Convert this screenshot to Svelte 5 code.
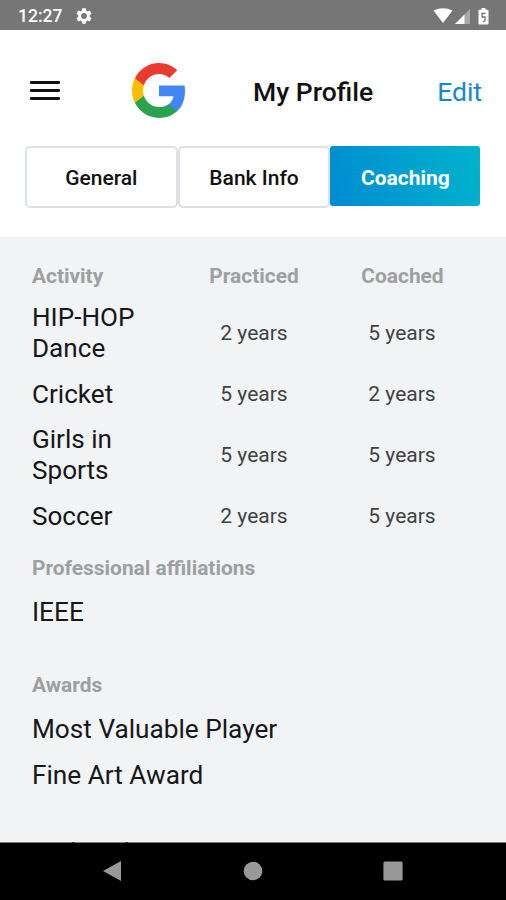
<script>
  let activeTab = 'Coaching';

  const tabs = ['General', 'Bank Info', 'Coaching'];

  const activities = [
    { name: 'HIP-HOP Dance', practiced: '2 years', coached: '5 years' },
    { name: 'Cricket', practiced: '5 years', coached: '2 years' },
    { name: 'Girls in Sports', practiced: '5 years', coached: '5 years' },
    { name: 'Soccer', practiced: '2 years', coached: '5 years' },
  ];

  const affiliations = ['IEEE'];
  const awards = ['Most Valuable Player', 'Fine Art Award'];
</script>

<div class="screen">
  <!-- Status bar -->
  <div class="status">
    <span class="time">12:27</span>
    <svg class="gear" viewBox="2 2 20 20" width="16" height="16">
      <path fill="#fff" fill-rule="evenodd" d="M19.14 12.94c.04-.3.06-.61.06-.94 0-.32-.02-.64-.07-.94l2.03-1.58c.18-.14.23-.41.12-.61l-1.92-3.32c-.12-.22-.37-.29-.59-.22l-2.39.96c-.5-.38-1.03-.7-1.62-.94l-.36-2.54c-.04-.24-.24-.41-.48-.41h-3.84c-.24 0-.43.17-.47.41l-.36 2.54c-.59.24-1.13.57-1.62.94l-2.39-.96c-.22-.08-.47 0-.59.22L2.74 8.87c-.12.21-.08.47.12.61l2.03 1.58c-.05.3-.09.63-.09.94s.02.64.07.94l-2.03 1.58c-.18.14-.23.41-.12.61l1.92 3.32c.12.22.37.29.59.22l2.39-.96c.5.38 1.03.7 1.62.94l.36 2.54c.05.24.24.41.48.41h3.84c.24 0 .44-.17.47-.41l.36-2.54c.59-.24 1.13-.56 1.62-.94l2.39.96c.22.08.47 0 .59-.22l1.92-3.32c.12-.22.07-.47-.12-.61l-2.01-1.58zM12 15.6A3.6 3.6 0 1 1 12 8.4a3.6 3.6 0 0 1 0 7.2z" />
    </svg>
    <svg class="signals" viewBox="0 0 58 18" width="58" height="18">
      <path fill="#fff" d="M0.500 3.500Q10 -1 19.500 3.500L10 16Z" />
      <path fill="#a8a8a8" d="M37 2V17H22Z" />
      <path fill="#fff" d="M31.500 7.500V17H22Z" />
      <path fill="#fff" d="M48.500 1h4v1.800h2q1 0 1 1V16.500q0 1-1 1h-8q-1 0-1-1V3.800q0-1 1-1h2z" />
      <path fill="none" stroke="#777" stroke-width="1.300" d="M52.500 6.500h-3.500v3.500h3v3.500l-2 1.500" />
    </svg>
  </div>

  <header>
    <div class="title-row">
      <button class="menu" type="button" aria-label="Menu">
        <span></span><span></span><span></span>
      </button>
      <svg class="logo" viewBox="1 1 21.56 22" width="53" height="55" preserveAspectRatio="none">
        <path fill="#4285f4" d="M22.56 12.250c0-.78-.07-1.530-.2-2.250H12v4.260h5.920c-.26 1.370-1.040 2.530-2.210 3.310v2.770h3.570c2.080-1.920 3.280-4.740 3.280-8.090z" />
        <path fill="#2ba24c" d="M12 23c2.970 0 5.460-.98 7.280-2.660l-3.570-2.770c-.98.66-2.230 1.060-3.710 1.060-2.860 0-5.290-1.930-6.160-4.530H2.180v2.840C3.990 20.530 7.700 23 12 23z" />
        <path fill="#fbbc05" d="M5.840 14.090c-.22-.66-.35-1.360-.35-2.090s.13-1.430.35-2.090V7.070H2.180C1.430 8.550 1 10.220 1 12s.43 3.450 1.180 4.930l3.660-2.840z" />
        <path fill="#ea3b30" d="M12 5.380c1.620 0 3.060.56 4.210 1.640l3.150-3.150C17.450 2.090 14.970 1 12 1 7.700 1 3.990 3.470 2.180 7.070l3.660 2.840c.87-2.600 3.300-4.530 6.160-4.530z" />
      </svg>
      <h1>My Profile</h1>
      <button class="edit" type="button">Edit</button>
    </div>

    <div class="tabs">
      {#each tabs as tab}
        <button
          class="tab"
          class:active={tab === activeTab}
          type="button"
          on:click={() => (activeTab = tab)}
        >
          {tab}
        </button>
      {/each}
    </div>
  </header>

  <main>
    <div class="row head">
      <h2>Activity</h2>
      <h2 class="center">Practiced</h2>
      <h2 class="center">Coached</h2>
    </div>
    {#each activities as activity}
      <div class="row">
        <span class="name">{activity.name}</span>
        <span class="years">{activity.practiced}</span>
        <span class="years">{activity.coached}</span>
      </div>
    {/each}

    <section class="affiliations">
      <h2>Professional affiliations</h2>
      {#each affiliations as item}
        <p>{item}</p>
      {/each}
    </section>

    <section class="awards">
      <h2>Awards</h2>
      {#each awards as item}
        <p>{item}</p>
      {/each}
    </section>
  </main>

  <!-- Android navigation -->
  <nav>
    <svg viewBox="0 0 20 22" width="20" height="22"><path fill="#999" d="M19 1V21L1 11Z" /></svg>
    <svg viewBox="0 0 20 20" width="20" height="20"><circle cx="10" cy="10" r="9.300" fill="#999" /></svg>
    <svg viewBox="0 0 20 20" width="20" height="20"><rect x=".4" y=".4" width="19.200" height="19.200" rx="1.500" fill="#999" /></svg>
  </nav>
</div>

<style>
  :global(body) {
    margin: 0;
  }

  .screen {
    width: 506px;
    height: 900px;
    display: flex;
    flex-direction: column;
    overflow: hidden;
    background: #f1f3f5;
    color: #15171a;
    font-family: Roboto, sans-serif;
  }

  .status {
    height: 30px;
    flex: none;
    box-sizing: border-box;
    display: flex;
    align-items: center;
    padding: 1px 15px 0 18px;
    background: #767676;
    color: #fff;
  }

  .time {
    width: 58px;
    font-size: 17.500px;
    font-weight: 500;
  }

  .signals {
    margin-left: auto;
  }

  header {
    height: 207px;
    flex: none;
    background: #fff;
  }

  .title-row {
    display: grid;
    grid-template-columns: 102px 105px 160px 1fr;
    align-items: center;
    height: 116px;
    padding: 5px 24px 0 30px;
    box-sizing: border-box;
  }

  button {
    padding: 0;
    border: 0;
    background: none;
    font-family: inherit;
    cursor: pointer;
  }

  .menu {
    display: flex;
    flex-direction: column;
    gap: 5px;
    width: 30px;
  }

  .menu span {
    height: 3px;
    border-radius: 1px;
    background: #111;
  }

  h1 {
    margin: 2px 0 0 16px;
    font-size: 26.500px;
    font-weight: 500;
    line-height: 31px;
    white-space: nowrap;
    color: #111;
  }

  .edit {
    justify-self: end;
    margin-top: 2px;
    font-size: 26.500px;
    line-height: 31px;
    color: #1688cf;
  }

  .tabs {
    display: flex;
    align-items: flex-start;
    padding-left: 25px;
  }

  .tab {
    box-sizing: border-box;
    width: 152.700px;
    height: 62px;
    padding-top: 1px;
    border: 2px solid #dee1e3;
    border-radius: 5px;
    font-size: 21px;
    font-weight: 500;
    color: #111;
  }

  .tab.active {
    width: 150px;
    height: 60px;
    padding-top: 3px;
    border: 0;
    border-radius: 3px;
    background: linear-gradient(75deg, #008bd1, #00b4cc);
    color: #fff;
    font-weight: 700;
  }

  main {
    height: 605px;
    flex: none;
    box-sizing: border-box;
    padding: 26.500px 32px 0;
    overflow: hidden;
  }

  .row {
    display: grid;
    grid-template-columns: 148px 148px 148px;
    align-items: center;
    margin-bottom: 14.600px;
  }

  .head {
    grid-template-columns: 148px 148px 149px;
    margin-bottom: 13.500px;
  }

  h2 {
    margin: 0;
    font-size: 20.900px;
    font-weight: 700;
    line-height: 25px;
    color: #9da0a2;
  }

  .center {
    text-align: center;
  }

  .name {
    width: 125px;
    font-size: 26.100px;
    line-height: 31px;
  }

  .years {
    text-align: center;
    font-size: 21px;
    line-height: 25px;
    color: #3f4245;
  }

  .affiliations {
    margin-top: 24.500px;
  }

  .awards {
    margin-top: 45.500px;
  }

  p {
    margin: 15.500px 0 0;
    font-size: 26.200px;
    line-height: 31px;
  }

  nav {
    position: relative;
    height: 58px;
    box-sizing: border-box;
    border-top: 1px solid #777;
    display: flex;
    justify-content: space-between;
    align-items: center;
    padding: 0 103px 2px 102px;
    background: #000;
  }

  /* tops of the next heading's tall letters, cut off by the bar */
  nav::before {
    content: '';
    position: absolute;
    top: -1px;
    left: 72px;
    width: 50px;
    height: 1px;
    border: solid #333;
    border-width: 0 3px;
  }
</style>
